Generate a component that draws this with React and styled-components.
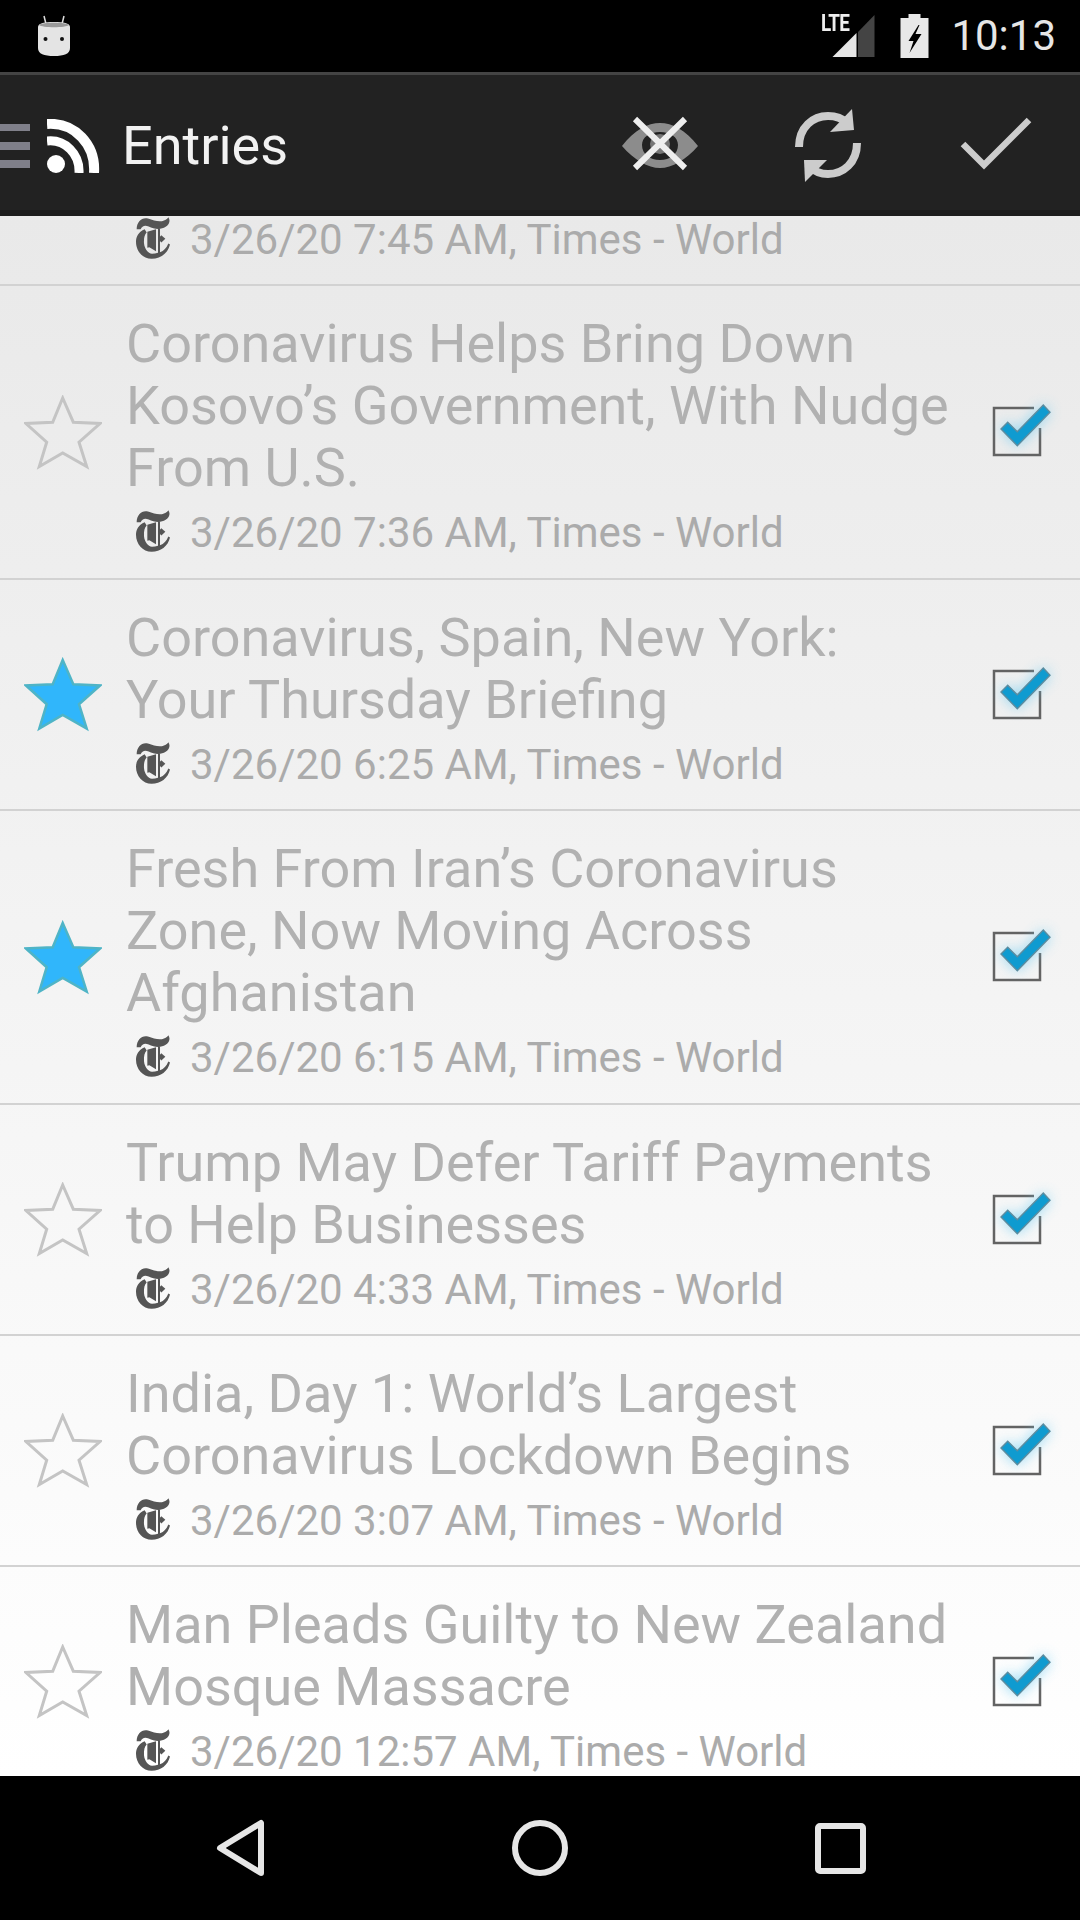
import React from "react";
import styled, { createGlobalStyle } from "styled-components";

const Global = createGlobalStyle`
  html, body { margin: 0; padding: 0; background: #000; }
  * { box-sizing: border-box; }
`;

const Screen = styled.div`
  width: 1080px; height: 1920px; display: flex; flex-direction: column;
  font-family: Roboto, "Liberation Sans", sans-serif; background: #000; overflow: hidden;
`;
const StatusBar = styled.div`
  height: 72px; flex: none; background: #000; display: flex; align-items: center; padding: 0 24px 0 37px;
`;
const StatusRight = styled.div`
  margin-left: auto; display: flex; align-items: center;
`;
const Lte = styled.span`
  font-size: 23px; font-weight: 700; color: #eee; line-height: 20px; letter-spacing: -1px;
  display: block; transform: scaleX(0.82); transform-origin: left center; margin: -24px -32px 0 0; width: 32px;
`;
const Clock = styled.span`
  font-size: 42px; color: #e6e6e6; line-height: 72px; margin-left: 22px;
`;
const SvgBlock = styled.svg`display: block; flex: none;`;
const LogoSvg = styled(SvgBlock)`margin-bottom: 3px;`;
const SoftStar = styled(SvgBlock)`filter: blur(0.5px);`;

const Toolbar = styled.div`
  height: 144px; flex: none; background: #222; border-top: 3px solid #444; border-bottom: 6px solid #1b1b1b;
  display: flex; align-items: center;
`;
const Brand = styled.div`display: flex; align-items: center; flex: 1; padding-top: 6px;`;
const Title = styled.span`
  font-size: 54px; color: #f2f2f2; margin-left: 22px; line-height: 1;
`;

const List = styled.div`
  height: 1560px; flex: none; overflow: hidden; background: linear-gradient(#e9e9e9, #fff);
  display: flex; flex-direction: column;
`;
const CutRow = styled.div`
  height: 70px; flex: none; border-bottom: 2px solid #d2d2d2; padding-left: 126px; overflow: hidden;
`;
const Row = styled.div`
  flex: none; display: flex; align-items: center; border-bottom: 2px solid #d2d2d2;
  height: ${p => p.$lines === 3 ? 294 : 231}px;
`;
const StarCell = styled.div`width: 126px; flex: none; display: flex; justify-content: center;`;
const Body = styled.div`flex: 1; min-width: 0; display: flex; flex-direction: column; align-self: stretch; padding-top: 26.5px;`;
const Headline = styled.div`
  font-size: 54px; line-height: 62px; color: #b1b1b1; white-space: pre-line;
`;
const Meta = styled.div`
  display: flex; align-items: center; height: 58px; margin-top: ${p => p.$cut ? -6 : 5}px; padding-left: 10px;
  font-size: 42px; color: #ababab; white-space: nowrap;
`;
const MetaText = styled.span`margin-left: 20px;`;
const CheckCell = styled.div`width: 120px; flex: none; display: flex; justify-content: center;`;

const NavBar = styled.div`
  height: 144px; flex: none; background: #000; display: flex; align-items: center; justify-content: center;
`;

const TLogo = () => (
  <LogoSvg width="34" height="42" viewBox="0 0 102 125">
    <path fill="#555" d="M2 36C2 14 18 -1 36 4C54 10 70 16 84 10C92 6 96 3 97 0C103 8 102 20 89 29C74 39 54 36 38 28C27 23 18 26 14 36Z" />
    <path fill="#555" d="M26 36C8 44 0 58 0 74C0 102 20 125 47 125C74 125 96 108 102 82L97 79C91 93 84 101 72 105L72 34L66 34L66 107C60 109 54 110 48 110C36 108 26 96 24 78C23 62 26 52 32 46Z" />
    <path fill="#555" d="M34 44L60 36L60 102L40 90L34 92Z" />
    <path fill="#555" d="M76 54L88 65L76 76L66 65Z" />
  </LogoSvg>
);

const StarIcon = ({ filled }) => (
  <SoftStar width="78" height="75" viewBox="0 0 78 75">
    <path
      d="M38.700 3L49.300 27.200L76 28.500L55 47.200L62.700 71.500L38.700 58L15.300 71.500L22.700 47.200L2 28.500L28.700 27.200Z"
      fill={filled ? "#30b6fb" : "none"}
      stroke={filled ? "#4fb4c6" : "#c4c4c4"}
      strokeWidth={filled ? 2.5 : 3}
      strokeLinejoin="miter"
    />
  </SoftStar>
);

const CheckIcon = () => (
  <SvgBlock width="120" height="120" viewBox="0 0 120 120">
    <path fill="none" stroke="#636363" strokeWidth="2.500" d="M74 36H34V83H80V56" />
    <path fill="#6fcdf2" opacity="0.8" style={{ filter: "blur(7px)" }} d="M41 57L47.700 50.300L57.300 59.700L83.300 33L90 40.300L57.300 73.700Z" />
    <path fill="#0f9bd0" stroke="#5d8c9f" strokeWidth="1.400" d="M41 57L47.700 50.300L57.300 59.700L83.300 33L90 40.300L57.300 73.700Z" />
  </SvgBlock>
);

const Hamburger = () => (
  <SvgBlock width="30" height="44" viewBox="0 0 30 44">
    <path fill="#80808a" d="M0 0H30V7H0ZM0 18H30V26H0ZM0 36H30V44H0Z" />
  </SvgBlock>
);
const Rss = () => (
  <SvgBlock width="53" height="54" viewBox="0 0 53 54" style={{ marginLeft: 17 }}>
    <circle cx="9" cy="45" r="9" fill="#fff" />
    <path fill="none" stroke="#fff" strokeWidth="9" d="M0 22C18 20 33 35 32 54" />
    <path fill="none" stroke="#fff" strokeWidth="10" d="M0 5C28 3 49 26 47 54" />
  </SvgBlock>
);

const Action = ({ children }) => (
  <SvgBlock width="168" height="135" viewBox="0 0 168 135">{children}</SvgBlock>
);

const rows = [
  { lines: 3, star: false, title: "Coronavirus Helps Bring Down\nKosovo’s Government, With Nudge\nFrom U.S.", meta: "3/26/20 7:36 AM, Times - World" },
  { lines: 2, star: true, title: "Coronavirus, Spain, New York:\nYour Thursday Briefing", meta: "3/26/20 6:25 AM, Times - World" },
  { lines: 3, star: true, title: "Fresh From Iran’s Coronavirus\nZone, Now Moving Across\nAfghanistan", meta: "3/26/20 6:15 AM, Times - World" },
  { lines: 2, star: false, title: "Trump May Defer Tariff Payments\nto Help Businesses", meta: "3/26/20 4:33 AM, Times - World" },
  { lines: 2, star: false, title: "India, Day 1: World’s Largest\nCoronavirus Lockdown Begins", meta: "3/26/20 3:07 AM, Times - World" },
  { lines: 2, star: false, title: "Man Pleads Guilty to New Zealand\nMosque Massacre", meta: "3/26/20 12:57 AM, Times - World" },
];

export default function App() {
  return (
    <Screen>
      <Global />
      <StatusBar>
        <SvgBlock width="34" height="42" viewBox="0 0 34 42">
          <path stroke="#ddd" strokeWidth="1.500" d="M7 1L9 9M27 1L25 9" />
          <path fill="#e4e4e4" d="M1 12C1 8 8 7 17 7C26 7 33 8 33 12V33C33 39 27 41 17 41C7 41 1 39 1 33Z" />
          <path fill="#999" d="M2 10C5 7 29 7 32 10C29 13 5 13 2 10Z" />
          <circle cx="8.500" cy="24" r="2" fill="#111" /><circle cx="25" cy="24" r="2" fill="#111" />
        </SvgBlock>
        <StatusRight>
          <Lte>LTE</Lte>
          <SvgBlock width="54" height="44" viewBox="0 0 54 44">
            <path fill="#e6e6e6" d="M11.500 43L35.500 19V43Z" />
            <path fill="#444" d="M37 18L53.500 1V43H37Z" />
          </SvgBlock>
          <SvgBlock width="29" height="44" viewBox="0 0 28 44" style={{ marginLeft: 25 }}>
            <path fill="#e8e8e8" fillRule="evenodd" d="M8 0H20V4H28V44H0V4H8ZM18 11L8 27H13L9 39L21 20H15L19 11Z" />
          </SvgBlock>
          <Clock>10:13</Clock>
        </StatusRight>
      </StatusBar>

      <Toolbar>
        <Brand>
          <Hamburger />
          <Rss />
          <Title>Entries</Title>
        </Brand>
        <Action>
          <g transform="translate(-576 -75)">
            <path fill="#8c8c8c" fillRule="evenodd" d="M622 146C634 130 648 123 660 123C672 123 686 130 698 146C686 160 672 168 660 168C648 168 634 160 622 146ZM642 145C642 154 650 160 660 160C670 160 678 154 678 145C678 137 670 132 660 132C650 132 642 137 642 145Z" />
            <path fill="#777" d="M650 144a10 10 0 1 0 20 0a10 10 0 1 0 -20 0Z" />
            <path stroke="#eee" strokeWidth="6" fill="none" d="M635 119L685 168M685 119L635 168" />
          </g>
        </Action>
        <Action>
          <g transform="translate(-744 -75)">
            <path fill="none" stroke="#ccc" strokeWidth="8" d="M799 147C799 127 813 116 828 116C836 116 842 118 847 123" />
            <path fill="#ccc" d="M852 109L854 130L830 132Z" />
            <path fill="none" stroke="#ccc" strokeWidth="8" d="M857 143C857 163 843 174 828 174C821 174 815 172 810 167" />
            <path fill="#ccc" d="M805 182L804 160L827 160Z" />
          </g>
        </Action>
        <Action>
          <g transform="translate(-912 -75)">
            <path fill="none" stroke="#ccc" strokeWidth="6.500" d="M963 144L984 165L1029 120" />
          </g>
        </Action>
      </Toolbar>

      <List>
        <CutRow>
          <Meta $cut><TLogo /><MetaText>3/26/20 7:45 AM, Times - World</MetaText></Meta>
        </CutRow>
        {rows.map((r) => (
          <Row key={r.meta} $lines={r.lines}>
            <StarCell><StarIcon filled={r.star} /></StarCell>
            <Body>
              <Headline>{r.title}</Headline>
              <Meta><TLogo /><MetaText>{r.meta}</MetaText></Meta>
            </Body>
            <CheckCell><CheckIcon /></CheckCell>
          </Row>
        ))}
      </List>

      <NavBar>
        <SvgBlock width="1080" height="144" viewBox="0 0 1080 144">
          <path fill="none" stroke="#e6e6e6" strokeWidth="6" strokeLinejoin="round" d="M261 47V97L220 72Z" />
          <circle cx="540" cy="72" r="25" fill="none" stroke="#e6e6e6" strokeWidth="6" />
          <rect x="818" y="50" width="45" height="45" rx="2" fill="none" stroke="#e6e6e6" strokeWidth="6" />
        </SvgBlock>
      </NavBar>
    </Screen>
  );
}
